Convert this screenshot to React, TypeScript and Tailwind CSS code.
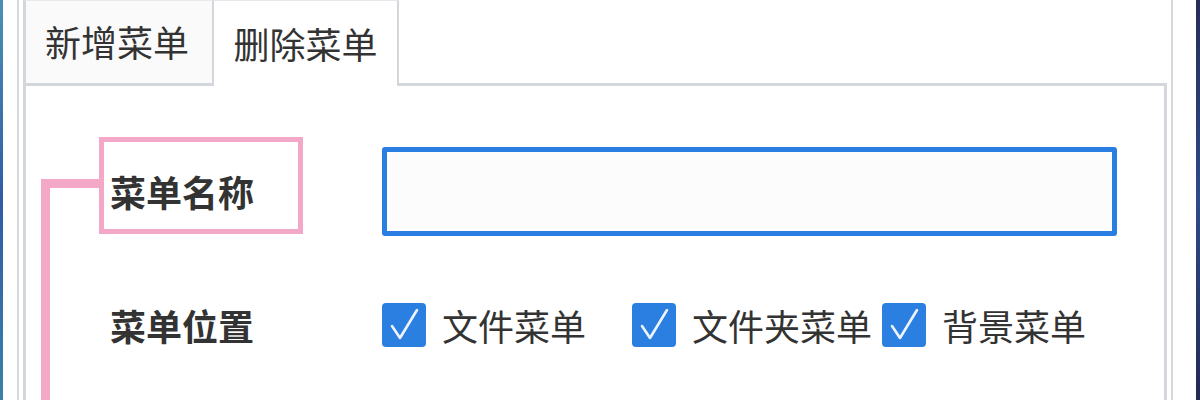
const font = "font-['Microsoft_YaHei','Noto_Sans_CJK_SC',sans-serif]";

function Check({ label }: { label: string }) {
  return (
    <label className="flex w-[250px] items-center">
      <span className="flex h-[44px] w-[44px] shrink-0 items-center justify-center rounded-[4px] bg-[#2b7fe0]">
        <svg width="44" height="44" viewBox="0 0 44 44" aria-hidden>
          <polyline
            points="10,23 18,35 35,7"
            fill="none"
            stroke="#eef4ff"
            strokeWidth="2.6"
            strokeLinecap="round"
            strokeLinejoin="round"
          />
        </svg>
      </span>
      <span className="ml-[16px] whitespace-nowrap text-[36px] leading-none text-[#333]">{label}</span>
    </label>
  );
}

export default function App() {
  return (
    <div className={`relative flex h-[400px] w-[1200px] overflow-hidden bg-white ${font}`}>
      {/* desktop peeking at the edges */}
      <div className="w-[3px] shrink-0 bg-gradient-to-b from-[#4d90b4] via-[#2f5ca6] to-[#3c80a8]" />

      <div className="flex flex-1 pl-[14px] pr-[23px]">
        <div className="flex flex-1 border-x-2 border-[#d5d9de] px-[4px]">
          <div className="flex flex-1 flex-col">
            {/* tabs */}
            <div className="flex items-end">
              <div className="flex h-[86px] w-[191px] items-center justify-center border-y-[3px] border-l-[3px] border-r-2 border-[#d3d7dc] border-t-[#e6e8eb] border-t bg-[#fafafa] pb-[2px] pr-[4px] text-[36px] leading-none text-[#333]">
                新增菜单
              </div>
              <div className="flex h-[86px] w-[185px] items-center justify-center border-r-2 border-t border-[#d3d7dc] border-t-[#e6e8eb] bg-white pb-[2px] text-[36px] leading-none text-[#333]">
                删除菜单
              </div>
              <div className="flex-1 border-b-[3px] border-[#d3d7dc]" />
            </div>

            {/* panel */}
            <div className="flex flex-1 flex-col border-x-[3px] border-[#d3d7dc] pl-[84px] pt-[61px]">
              <div className="flex items-center">
                <div className="w-[272px] pb-[2px] text-[36px] font-bold leading-none text-[#333]">菜单名称</div>
                <input
                  className="h-[89px] w-[735px] rounded-[3px] border-[5px] border-[#2a7de1] bg-[#fcfcfc] outline-none"
                  type="text"
                />
              </div>
              <div className="mt-[67px] flex h-[44px] items-center">
                <div className="w-[272px] text-[36px] font-bold leading-none text-[#333]">菜单位置</div>
                <div className="flex">
                  <Check label="文件菜单" />
                  <Check label="文件夹菜单" />
                  <Check label="背景菜单" />
                </div>
              </div>
            </div>
          </div>
        </div>
      </div>

      <div className="w-[4px] shrink-0 bg-gradient-to-b from-[#262e57] via-[#2f4a8a] to-[#232a52]" />

      {/* pink annotation overlay */}
      <div className="absolute left-[99px] top-[137px] h-[97px] w-[204px] border-[5px] border-[#f4a8c8]" />
      <div className="absolute left-[41px] top-[179px] h-[9px] w-[60px] bg-[#f4a8c8]" />
      <div className="absolute left-[41px] top-[179px] h-[230px] w-[9px] bg-[#f4a8c8]" />
    </div>
  );
}
